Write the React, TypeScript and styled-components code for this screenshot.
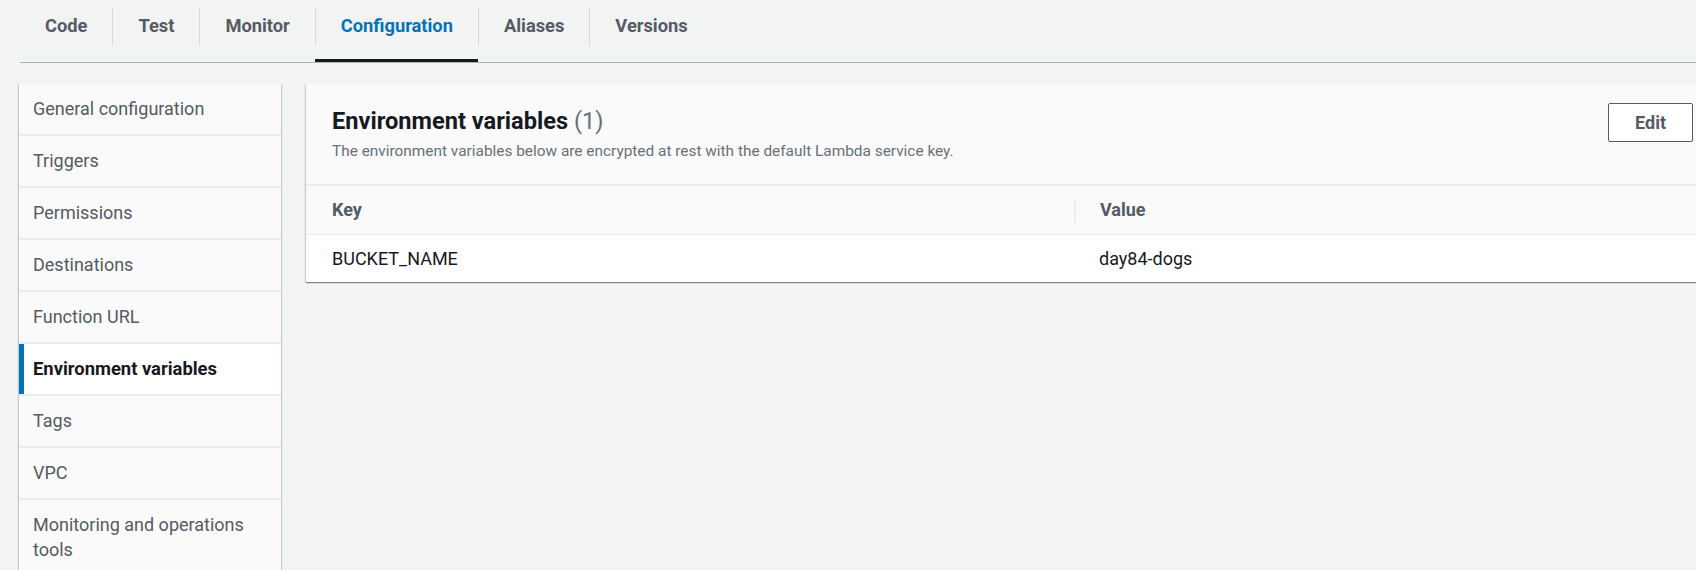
import React from "react";
import styled, { createGlobalStyle, css } from "styled-components";

const Global = createGlobalStyle`
  html, body {
    margin: 0;
    padding: 0;
    background: #f2f3f3;
    overflow: hidden;
    width: 1696px;
    height: 570px;
  }
  body {
    font-family: Roboto, "Liberation Sans", Arial, sans-serif;
    color: #16191f;
    -webkit-font-smoothing: antialiased;
  }
  * { box-sizing: border-box; }
`;

const Page = styled.div`
  display: flex;
  flex-direction: column;
  width: 1696px;
`;

const TabBar = styled.nav`
  display: flex;
  margin-left: 20px;
  height: 63px;
  border-bottom: 1px solid #aab7b8;
`;

const Tab = styled.div<{ $active?: boolean }>`
  position: relative;
  display: flex;
  align-items: flex-start;
  padding-top: 8px;
  height: 62px;
  ${(p) =>
    p.$active &&
    css`
      &::after {
        content: "";
        position: absolute;
        left: 0;
        right: 0;
        bottom: 0;
        height: 3px;
        background: #16191f;
      }
    `}
`;

const TabLabel = styled.span<{ $active?: boolean; $first?: boolean }>`
  display: flex;
  align-items: center;
  height: 38px;
  padding: 0 25px 3px;
  border-left: 1px solid ${(p) => (p.$first ? "transparent" : "#d5dbdb")};
  font-size: 18.3px;
  font-weight: 700;
  color: ${(p) => (p.$active ? "#0073bb" : "#545b64")};
  margin-left: ${(p) => (p.$first ? "-1px" : "0")};
`;

const Content = styled.div`
  display: grid;
  grid-template-columns: 262px 1412px;
  column-gap: 25px;
  padding: 21px 0 0 19px;
  align-items: start;
`;

const cardShadow = css`
  box-shadow: 0 1px 1px 0 rgba(0, 28, 36, 0.3),
    1px 1px 1px 0 rgba(0, 28, 36, 0.15),
    -1px 1px 1px 0 rgba(0, 28, 36, 0.15);
`;

const SideNav = styled.ul`
  list-style: none;
  margin: 0;
  padding: 0;
  background: #fafafa;
  ${cardShadow}
  min-height: 500px;
`;

const NavItem = styled.li<{ $active?: boolean }>`
  padding: 11.5px 14px 13.5px 14px;
  min-height: 52px;
  border-bottom: 2px solid #eaeded;
  font-size: 18px;
  line-height: 25px;
  color: #545b64;
  ${(p) =>
    p.$active &&
    css`
      background: #ffffff;
      color: #16191f;
      font-weight: 700;
      font-size: 18.4px;
      box-shadow: inset 5px 0 0 #0073bb;
    `}
`;

const Panel = styled.section`
  background: #ffffff;
  ${cardShadow}
`;

const PanelHeader = styled.header`
  display: flex;
  justify-content: space-between;
  align-items: flex-start;
  background: #fafafa;
  padding: 19px 25px 22px 26px;
  border-bottom: 2px solid #eaeded;
`;

const HeaderText = styled.div`
  display: flex;
  flex-direction: column;
`;

const Title = styled.h2`
  margin: 2px 0 0;
  font-size: 23.6px;
  line-height: 32px;
  font-weight: 700;
  color: #16191f;
`;

const Count = styled.span`
  font-weight: 400;
  color: #687078;
`;

const Description = styled.p`
  margin: 3px 0 0;
  font-size: 15.4px;
  line-height: 22px;
  color: #687078;
`;

const Button = styled.button`
  height: 39px;
  padding: 0 26px;
  border: 1px solid #545b64;
  border-radius: 2px;
  background: #ffffff;
  font-family: inherit;
  font-size: 18px;
  font-weight: 700;
  color: #545b64;
`;

const Table = styled.table`
  width: 100%;
  border-collapse: collapse;
  table-layout: fixed;
`;

const Th = styled.th<{ $divider?: boolean }>`
  position: relative;
  height: 48px;
  padding: 0 25px 0 26px;
  text-align: left;
  font-size: 18px;
  font-weight: 700;
  color: #545b64;
  background: #fafafa;
  border-bottom: 1px solid #eaeded;
  ${(p) =>
    p.$divider &&
    css`
      padding-left: 25px;
      &::before {
        content: "";
        position: absolute;
        left: -1px;
        top: 14px;
        height: 23px;
        width: 2px;
        background: #eaeded;
      }
    `}
`;

const Td = styled.td<{ $second?: boolean }>`
  height: 48px;
  padding: 0 25px 0 ${(p) => (p.$second ? "24px" : "26px")};
  font-size: 18px;
  color: #16191f;
  background: #ffffff;
`;

const tabs = ["Code", "Test", "Monitor", "Configuration", "Aliases", "Versions"];
const navItems = [
  "General configuration",
  "Triggers",
  "Permissions",
  "Destinations",
  "Function URL",
  "Environment variables",
  "Tags",
  "VPC",
  "Monitoring and operations tools",
];

export default function App() {
  return (
    <Page>
      <Global />
      <TabBar>
        {tabs.map((t, i) => (
          <Tab key={t} $active={t === "Configuration"}>
            <TabLabel $first={i === 0} $active={t === "Configuration"}>
              {t}
            </TabLabel>
          </Tab>
        ))}
      </TabBar>
      <Content>
        <SideNav>
          {navItems.map((n) => (
            <NavItem key={n} $active={n === "Environment variables"}>
              {n}
            </NavItem>
          ))}
        </SideNav>
        <Panel>
          <PanelHeader>
            <HeaderText>
              <Title>
                Environment variables <Count>(1)</Count>
              </Title>
              <Description>
                The environment variables below are encrypted at rest with the
                default Lambda service key.
              </Description>
            </HeaderText>
            <Button>Edit</Button>
          </PanelHeader>
          <Table>
            <colgroup>
              <col style={{ width: "769px" }} />
              <col />
            </colgroup>
            <thead>
              <tr>
                <Th>Key</Th>
                <Th $divider>Value</Th>
              </tr>
            </thead>
            <tbody>
              <tr>
                <Td>BUCKET_NAME</Td>
                <Td $second>day84-dogs</Td>
              </tr>
            </tbody>
          </Table>
        </Panel>
      </Content>
    </Page>
  );
}
